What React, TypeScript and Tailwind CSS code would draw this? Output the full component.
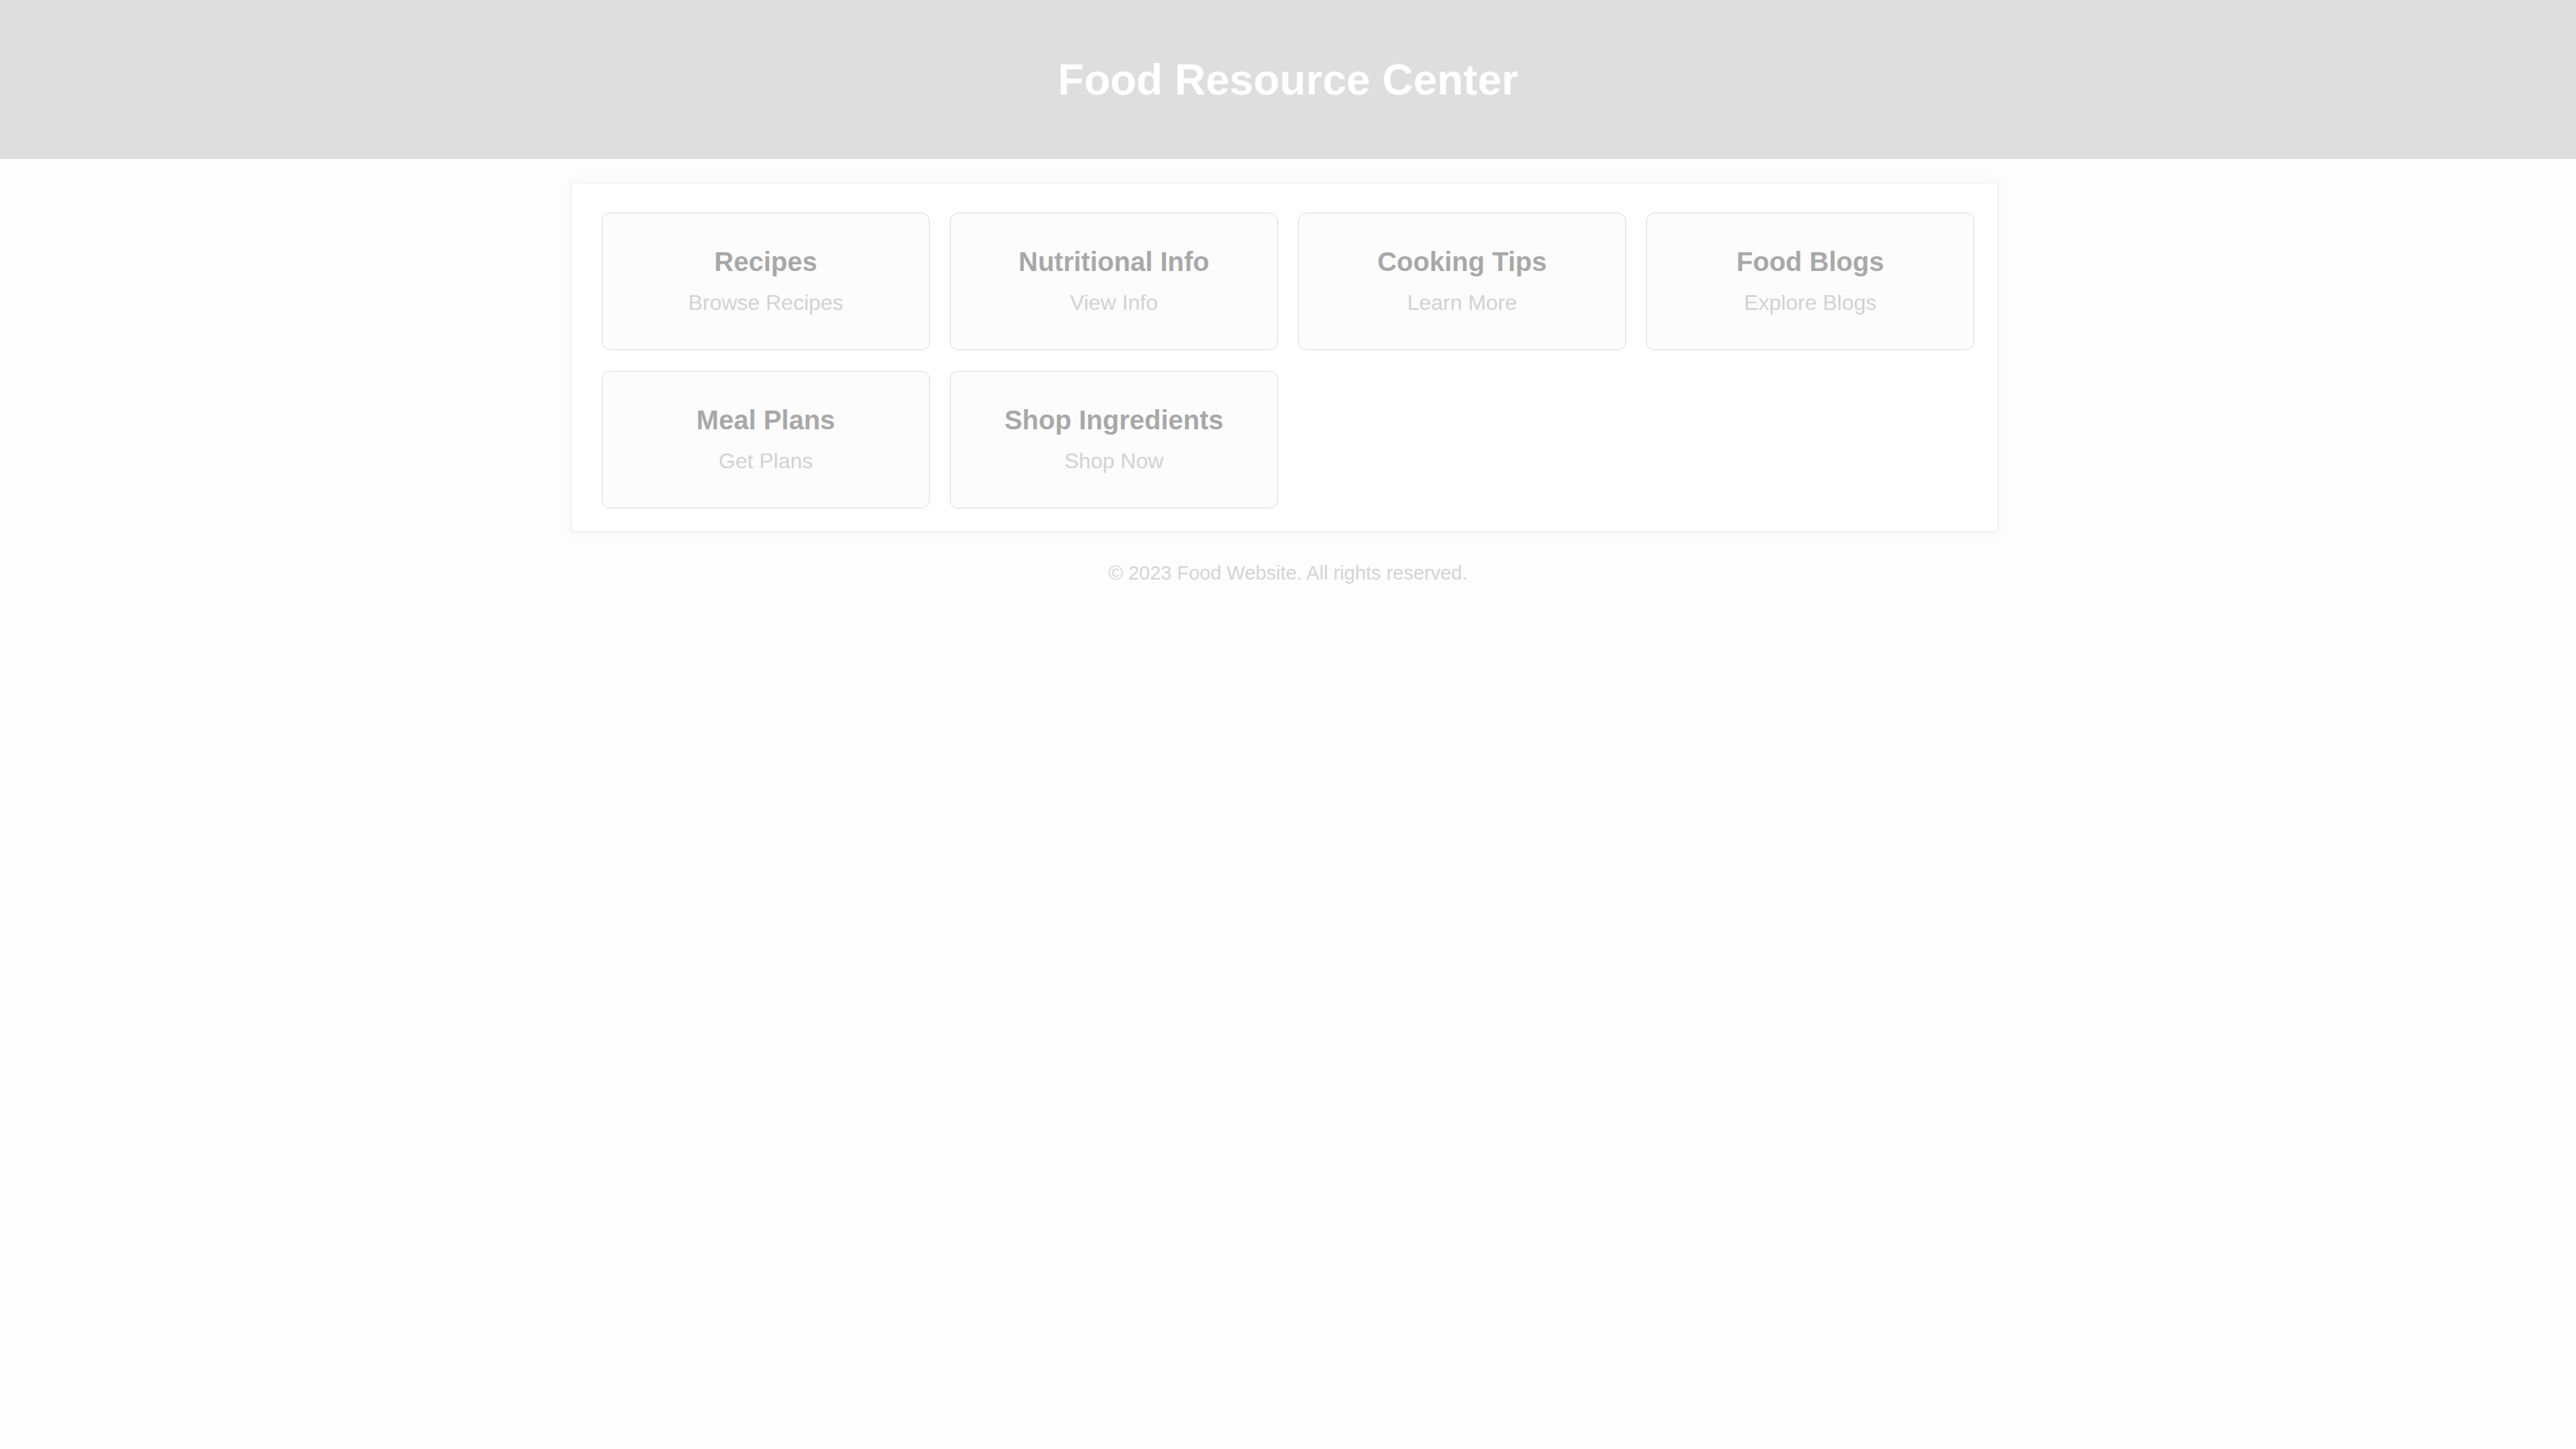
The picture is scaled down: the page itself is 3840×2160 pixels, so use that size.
const links = [
  { title: "Recipes", action: "Browse Recipes" },
  { title: "Nutritional Info", action: "View Info" },
  { title: "Cooking Tips", action: "Learn More" },
  { title: "Food Blogs", action: "Explore Blogs" },
  { title: "Meal Plans", action: "Get Plans" },
  { title: "Shop Ingredients", action: "Shop Now" },
];

export default function App() {
  return (
    <div className="min-h-screen bg-[#fdfdfd] font-['Liberation_Sans',Arial,sans-serif]">
      {/* Header */}
      <header className="h-[237px] bg-[#dedede] flex items-center justify-center">
        <h1 className="text-[64px] leading-[76px] font-bold text-white">Food Resource Center</h1>
      </header>

      {/* Resource grid */}
      <main className="pt-[35px] flex justify-center pr-[10px]">
        <div className="w-[2128px] bg-white border border-[#e8e8e8] shadow-[0_0_24px_rgba(0,0,0,0.03)] pt-[44px] pl-[45px] pr-[34px] pb-[34px]">
          <div className="grid grid-cols-[repeat(4,489px)] gap-x-[30px] gap-y-[31px]">
            {links.map((l) => (
              <a
                key={l.title}
                href="#"
                className="h-[205px] rounded-[12px] border border-[#dadada] bg-[#fcfcfc] flex flex-col items-center pt-[48px]"
              >
                <span className="text-[40px] leading-[48px] font-bold text-[#a8a8a8]">{l.title}</span>
                <span className="mt-[18px] text-[32px] leading-[38px] text-[#d2d2d2]">{l.action}</span>
              </a>
            ))}
          </div>
        </div>
      </main>

      {/* Footer */}
      <footer className="mt-[45px] text-center text-[29px] leading-[32px] text-[#d4d4d4]">
        © 2023 Food Website. All rights reserved.
      </footer>
    </div>
  );
}
